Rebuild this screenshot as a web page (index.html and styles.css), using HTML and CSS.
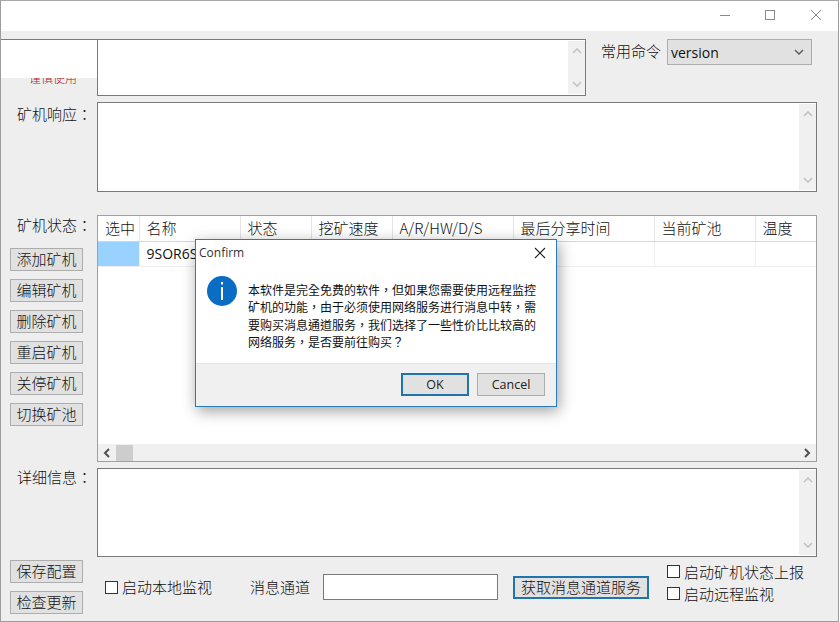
FILE: index.html
```html
<!DOCTYPE html>
<html lang="zh">
<head>
<meta charset="utf-8">
<title>Miner monitor</title>
<link rel="stylesheet" href="styles.css">
</head>
<body>
<svg class="defs" width="0" height="0" aria-hidden="true">
  <symbol id="up" viewBox="0 0 10 6"><path d="M1 5 L5 1 L9 5" fill="none" stroke="currentColor" stroke-width="1.5"/></symbol>
  <symbol id="down" viewBox="0 0 10 6"><path d="M1 1 L5 5 L9 1" fill="none" stroke="currentColor" stroke-width="1.5"/></symbol>
</svg>
<div class="window">
  <header class="titlebar">
    <svg class="winctl winctl-min" viewBox="0 0 10 10"><path d="M0 5.5H10" stroke="#8a8a8a" fill="none"/></svg>
    <svg class="winctl winctl-max" viewBox="0 0 10 10"><rect x="0.5" y="0.5" width="9" height="9" stroke="#8a8a8a" fill="none"/></svg>
    <svg class="winctl winctl-close" viewBox="0 0 10 10"><path d="M0 0L10 10M10 0L0 10" stroke="#8a8a8a" fill="none"/></svg>
  </header>

  <section class="row row-command">
    <div class="side"><span class="warn">谨慎使用</span></div>
    <div class="box box-command">
      <div class="vscroll"><svg class="chev"><use href="#up"/></svg><svg class="chev"><use href="#down"/></svg></div>
    </div>
    <div class="common">
      <span class="label-plain">常用命令</span>
      <div class="select"><span>version</span><svg class="chev chev-dark"><use href="#down"/></svg></div>
    </div>
    <div class="top-cover"></div>
  </section>

  <section class="row row-response">
    <div class="side"><span class="label" lang="zh-Hant">矿机响应：</span></div>
    <div class="box box-wide">
      <div class="vscroll"><svg class="chev"><use href="#up"/></svg><svg class="chev"><use href="#down"/></svg></div>
    </div>
  </section>

  <section class="row row-status">
    <div class="side">
      <span class="label" lang="zh-Hant">矿机状态：</span>
      <div class="btn-stack">
        <button class="btn">添加矿机</button>
        <button class="btn">编辑矿机</button>
        <button class="btn">删除矿机</button>
        <button class="btn">重启矿机</button>
        <button class="btn">关停矿机</button>
        <button class="btn">切换矿池</button>
      </div>
    </div>
    <div class="table-box">
      <div class="table-view">
        <table class="miners">
          <colgroup>
            <col class="c1"><col class="c2"><col class="c3"><col class="c4"><col class="c5"><col class="c6"><col class="c7"><col class="c8">
          </colgroup>
          <thead>
            <tr><th>选中</th><th>名称</th><th>状态</th><th>挖矿速度</th><th>A/R/HW/D/S</th><th>最后分享时间</th><th>当前矿池</th><th>温度</th></tr>
          </thead>
          <tbody>
            <tr><td class="selected"></td><td>9SOR6S</td><td></td><td></td><td></td><td></td><td></td><td></td></tr>
          </tbody>
        </table>
      </div>
      <div class="hscroll">
        <svg class="hchev" viewBox="0 0 8 10"><path d="M6 1L2 5L6 9" fill="none" stroke="#505050" stroke-width="2"/></svg>
        <div class="thumb"></div>
        <svg class="hchev hchev-end" viewBox="0 0 8 10"><path d="M2 1L6 5L2 9" fill="none" stroke="#505050" stroke-width="2"/></svg>
      </div>
    </div>
  </section>

  <section class="row row-detail">
    <div class="side"><span class="label" lang="zh-Hant">详细信息：</span></div>
    <div class="box box-wide box-detail">
      <div class="vscroll"><svg class="chev"><use href="#up"/></svg><svg class="chev"><use href="#down"/></svg></div>
    </div>
  </section>

  <section class="bottom">
    <div class="btn-stack btn-stack-bottom">
      <button class="btn">保存配置</button>
      <button class="btn">检查更新</button>
    </div>
    <label class="check check-local"><input type="checkbox">启动本地监视</label>
    <span class="label-plain channel">消息通道</span>
    <input class="channel-input" type="text">
    <button class="btn btn-focus">获取消息通道服务</button>
    <div class="check-col">
      <label class="check"><input type="checkbox">启动矿机状态上报</label>
      <label class="check"><input type="checkbox">启动远程监视</label>
    </div>
  </section>

  <div class="dialog" role="dialog">
    <div class="dialog-title">
      <span>Confirm</span>
      <svg class="dialog-x" viewBox="0 0 12 12"><path d="M1 1L11 11M11 1L1 11" stroke="#222" stroke-width="1.1" fill="none"/></svg>
    </div>
    <div class="dialog-body">
      <svg class="info" viewBox="0 0 30 30">
        <circle cx="15" cy="15" r="15" fill="#0b6cc4"/>
        <rect x="14" y="6" width="2" height="2.5" fill="#fff"/>
        <rect x="14" y="11" width="2" height="13" fill="#fff"/>
      </svg>
      <p class="dialog-text" lang="zh-Hant">本软件是完全免费的软件，但如果您需要使用远程监控矿机的功能，由于必须使用网络服务进行消息中转，需要购买消息通道服务，我们选择了一些性价比比较高的网络服务，是否要前往购买？</p>
    </div>
    <div class="dialog-foot">
      <button class="dbtn dbtn-ok">OK</button>
      <button class="dbtn">Cancel</button>
    </div>
  </div>
</div>
</body>
</html>
```

FILE: styles.css
```css
* { box-sizing: border-box; }
html, body { margin: 0; padding: 0; width: 840px; height: 622px; overflow: hidden; background: #fff; }
body { font-family: "Noto Sans CJK SC", "Liberation Sans", sans-serif; font-size: 15px; color: #111; font-weight: 300; }
.defs { position: absolute; }

.window {
  position: relative;
  width: 839px;
  height: 622px;
  background: #eeeeee;
  border: 1px solid #9c9c9c;
  border-top-color: #a8a8a8;
  display: flex;
  flex-direction: column;
}

.titlebar {
  height: 30px;
  flex: none;
  background: #fff;
  position: relative;
  display: flex;
  align-items: center;
  justify-content: flex-end;
  padding-bottom: 2px;
}
.winctl { width: 10px; height: 10px; flex: none; }
.winctl-min { margin-right: 35px; }
.winctl-max { margin-right: 36px; }
.winctl-close { margin-right: 17px; }

.row { display: flex; flex: none; position: relative; }
.side { width: 96px; flex: none; display: flex; flex-direction: column; }
.label { margin-left: 16px; line-height: 18px; white-space: nowrap; font-family: "Noto Sans CJK TC", "Noto Sans CJK SC", sans-serif; }
.label-plain { white-space: nowrap; line-height: 18px; }

.box {
  background: #fff;
  border: 1px solid #7a7a7a;
  display: flex;
  justify-content: flex-end;
}
.vscroll {
  width: 17px;
  margin: 1px 0 1px;
  background: #f0f0f0;
  display: flex;
  flex-direction: column;
  justify-content: space-between;
  align-items: center;
  padding: 7px 0;
  color: #c2c2c2;
}
.chev { width: 10px; height: 6px; display: block; }
.chev-dark { color: #606060; }

.row-command { margin-top: 8px; height: 57px; }
.row-command .side { justify-content: flex-start; overflow: hidden; }
.warn { color: #b3131b; font-size: 12px; line-height: 14px; margin: 32px 0 0 28px; white-space: nowrap; }
.box-command { width: 489px; height: 57px; }
.common { display: flex; align-items: flex-start; margin-left: 15px; }
.common .label-plain { margin-top: 3px; width: 66px; }
.select {
  width: 145px;
  height: 26px;
  background: #e1e1e1;
  border: 1px solid #adadad;
  display: flex;
  align-items: center;
  justify-content: space-between;
  padding: 0 7px 0 3px;
  font-family: "Open Sans", "Liberation Sans", sans-serif;
  font-size: 14px;
  font-weight: 400;
}
.top-cover {
  position: absolute;
  left: 0;
  top: 0;
  width: 96px;
  height: 39px;
  background: #fff;
  border-top: 1px solid #7a7a7a;
}

.row-response { margin-top: 6px; height: 90px; }
.row-response .label { margin-top: 3px; }
.box-wide { width: 720px; height: 90px; }

.row-status { margin-top: 23px; height: 247px; }
.row-status .label { margin-top: 1px; }
.btn-stack { display: flex; flex-direction: column; gap: 8px; margin-left: 9px; }
.row-status .btn-stack { margin-top: 14px; }
.btn {
  width: 73px;
  height: 23px;
  padding: 0 0 2px;
  background: #e1e1e1;
  border: 1px solid #adadad;
  font: inherit;
  color: inherit;
  line-height: 19px;
  white-space: nowrap;
}

.table-box {
  width: 720px;
  height: 247px;
  border: 1px solid #a0a0a0;
  background: #fff;
  display: flex;
  flex-direction: column;
}
.table-view { flex: 1; overflow: hidden; }
.miners { border-collapse: collapse; table-layout: fixed; width: 718px; }
.c1 { width: 41px; } .c2 { width: 101px; } .c3 { width: 71px; } .c4 { width: 81px; }
.c5 { width: 121px; } .c6 { width: 141px; } .c7 { width: 101px; } .c8 { width: 61px; }
.miners th {
  height: 25px;
  padding: 0 0 1px 7px;
  font-weight: 300;
  text-align: left;
  white-space: nowrap;
  border-right: 1px solid #e5e5e5;
  border-bottom: 1px solid #d5d5d5;
  overflow: hidden;
}
.miners th:last-child { border-right: 0; }
.miners td {
  height: 25px;
  padding: 0 0 0 7px;
  border-right: 1px solid #f0f0f0;
  border-bottom: 1px solid #eeeeee;
  white-space: nowrap;
  overflow: hidden;
  font-family: "Open Sans", "Liberation Sans", sans-serif;
  font-size: 14px;
  font-weight: 400;
}
.miners td:last-child { border-right: 0; }
.miners td.selected { background: #99d1ff; }

.hscroll {
  height: 17px;
  flex: none;
  background: #f0f0f0;
  display: flex;
  align-items: center;
  padding-left: 5px;
}
.hchev { width: 8px; height: 10px; flex: none; }
.thumb { width: 17px; height: 16px; background: #cdcdcd; margin-left: 5px; }
.hchev-end { margin-left: auto; margin-right: 5px; }

.row-detail { margin-top: 6px; height: 89px; }
.row-detail .label { margin-top: 0; }
.box-detail { height: 89px; }

.bottom { display: flex; align-items: center; height: 60px; flex: none; }
.btn-stack-bottom { flex: none; }
.check { display: flex; align-items: center; white-space: nowrap; line-height: 18px; }
.check input {
  appearance: none;
  -webkit-appearance: none;
  width: 13px;
  height: 13px;
  margin: 0 4px 0 0;
  background: #fff;
  border: 1px solid #333;
  flex: none;
}
.check-local { margin-left: 22px; }
.channel { margin-left: 38px; width: 59px; }
.channel-input {
  width: 175px;
  height: 26px;
  margin: 0 0 0 14px;
  background: #fff;
  border: 1px solid #7a7a7a;
  padding: 0;
}
.btn-focus {
  width: 136px;
  margin-left: 15px;
  border: 2px solid #1f75ab;
  line-height: 17px;
}
.check-col { margin-left: 18px; margin-bottom: 9px; display: flex; flex-direction: column; gap: 4px; }

.dialog {
  position: absolute;
  left: 194px;
  top: 238px;
  width: 362px;
  height: 168px;
  background: #fff;
  border: 1px solid #2a7cb8;
  box-shadow: 2px 4px 14px rgba(0, 0, 0, 0.38);
  display: flex;
  flex-direction: column;
}
.dialog-title {
  height: 25px;
  flex: none;
  display: flex;
  align-items: center;
  justify-content: space-between;
  padding: 0 10px 0 3px;
  font-family: "Open Sans", "Liberation Sans", sans-serif;
  font-size: 12px;
  font-weight: 400;
  color: #333;
}
.dialog-x { width: 12px; height: 12px; }
.dialog-body {
  flex: 1;
  display: flex;
  align-items: flex-start;
  padding: 11px 0 0 11px;
}
.info { width: 30px; height: 30px; flex: none; }
.dialog-text {
  margin: 5px 0 0 11px;
  width: 290px;
  font-family: "Noto Sans CJK TC", "Noto Sans CJK SC", sans-serif;
  font-size: 12px;
  line-height: 17.4px;
  font-weight: 400;
  color: #111;
}
.dialog-foot {
  height: 43px;
  flex: none;
  background: #f0f0f0;
  border-top: 1px solid #e4e4e4;
  display: flex;
  justify-content: flex-end;
  align-items: flex-start;
  gap: 8px;
  padding: 9px 11px 0 0;
}
.dbtn {
  width: 68px;
  height: 23px;
  padding: 0;
  background: #e1e1e1;
  border: 1px solid #adadad;
  font-family: "Open Sans", "Liberation Sans", sans-serif;
  font-size: 12.5px;
  color: #222;
}
.dbtn-ok { border: 2px solid #1f75ab; }
```
